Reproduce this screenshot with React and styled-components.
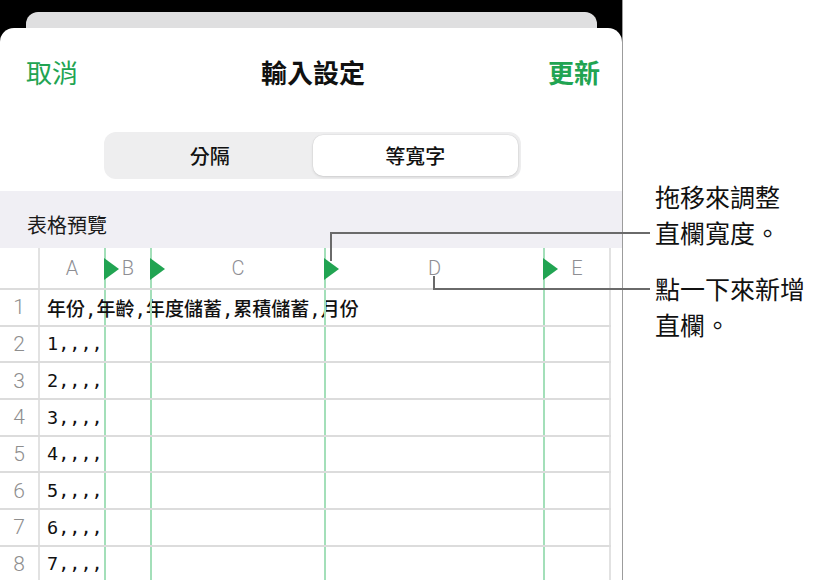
import React from "react";
import styled, { createGlobalStyle } from "styled-components";

const GREEN = "#21a452";
const CJK = `"Noto Sans CJK TC", "Noto Sans", sans-serif`;
const MONO = `"DejaVu Sans Mono", "Noto Sans CJK TC", monospace`;
const LATIN = `Roboto, "Liberation Sans", sans-serif`;

const GlobalStyle = createGlobalStyle`
  html, body { margin: 0; padding: 0; background: #fff; }
  body { width: 825px; height: 580px; overflow: hidden; font-family: ${CJK}; }
  * { box-sizing: border-box; }
`;

const Page = styled.div`
  position: relative;
  display: flex;
  width: 825px;
  height: 580px;
  overflow: hidden;
`;

const Stage = styled.div`
  width: 623px;
  flex-shrink: 0;
  background: #000;
  border-right: 1px solid #9c9c9c;
  padding-top: 12px;
  display: flex;
  flex-direction: column;
  overflow: hidden;
`;

const BackCard = styled.div`
  flex-shrink: 0;
  height: 16px;
  margin: 0 25px 0 26px;
  background: #dfdfe0;
  border-radius: 12px 12px 0 0;
`;

const Sheet = styled.div`
  flex: 1;
  min-height: 0;
  overflow: hidden;
  background: #fff;
  border-radius: 14px 14px 0 0;
  display: flex;
  flex-direction: column;
`;

const Nav = styled.div`
  flex-shrink: 0;
  display: grid;
  grid-template-columns: 1fr auto 1fr;
  align-items: center;
  padding: 29px 22px 0 26px;
  font-size: 26px;
  line-height: 30px;
`;

const NavButton = styled.span`
  color: ${GREEN};
  font-weight: ${({ $bold }) => ($bold ? 700 : 400)};
  justify-self: ${({ $end }) => ($end ? "end" : "start")};
`;

const Title = styled.span`
  color: #111;
  font-weight: 700;
`;

const Segmented = styled.div`
  flex-shrink: 0;
  margin: 45px 0 0 104px;
  width: 417px;
  height: 47px;
  padding: 3px;
  display: grid;
  grid-template-columns: 1fr 1fr;
  background: #eeeeef;
  border-radius: 12px;
`;

const Segment = styled.div`
  display: flex;
  align-items: center;
  justify-content: center;
  border-radius: 10px;
  font-size: 20px;
  font-weight: 500;
  color: #111;
  background: ${({ $active }) => ($active ? "#fff" : "transparent")};
  box-shadow: ${({ $active }) =>
    $active ? "0 1px 3px rgba(0,0,0,0.12), 0 0 0 0.5px rgba(0,0,0,0.05)" : "none"};
`;

const SectionBand = styled.div`
  flex-shrink: 0;
  margin-top: 12px;
  height: 57px;
  background: #f0eff4;
  display: flex;
  align-items: flex-end;
  padding: 0 0 9px 27px;
  font-size: 20px;
  line-height: 28px;
  color: #1a1a1a;
`;

const Table = styled.div`
  flex-shrink: 0;
  width: 611px;
`;

const Row = styled.div`
  display: grid;
  grid-template-columns: 40px 66px 46px 174px 219px 66px;
  height: ${({ $header }) => ($header ? "42px" : "36.67px")};
  border-bottom: 2px solid #dcdcdc;
`;

const Cell = styled.div`
  position: relative;
  display: flex;
  align-items: center;
  justify-content: center;
  border-right: 2px solid ${({ $green }) => ($green ? "#a3dfb9" : "#e2e2e2")};
`;

const ColLetter = styled(Cell)`
  font-family: ${LATIN};
  font-weight: 300;
  font-size: 20px;
  color: #8e8e93;
`;

const RowNum = styled(Cell)`
  font-family: ${LATIN};
  font-weight: 300;
  font-size: 21px;
  color: #8e8e8e;
`;

const DataCell = styled(Cell)`
  justify-content: flex-start;
  padding-left: 7px;
  white-space: nowrap;
  overflow: visible;
  font-family: ${MONO};
  font-size: ${({ $head }) => ($head ? "19px" : "18.5px")};
  font-weight: ${({ $head }) => ($head ? 500 : 400)};
  color: #111;
`;

const Handle = styled.span`
  position: absolute;
  left: -2px;
  top: 10px;
  width: 0;
  height: 0;
  border-left: 15px solid ${GREEN};
  border-top: 11px solid transparent;
  border-bottom: 11px solid transparent;
`;

const Notes = styled.div`
  padding: 178px 0 0 32px;
  display: flex;
  flex-direction: column;
  gap: 20px;
  font-size: 25px;
  line-height: 36px;
  color: #111;
  white-space: nowrap;
`;

const Note = styled.p`
  margin: 0;
`;

const Leaders = styled.svg`
  position: absolute;
  left: 0;
  top: 0;
  width: 825px;
  height: 580px;
  pointer-events: none;
`;

const columns = ["A", "B", "C", "D", "E"];
const rows = ["1,,,,", "2,,,,", "3,,,,", "4,,,,", "5,,,,", "6,,,,", "7,,,,"];

function EmptyCells() {
  return (
    <>
      <Cell $green />
      <Cell $green />
      <Cell $green />
      <Cell />
    </>
  );
}

export default function App() {
  return (
    <>
      <GlobalStyle />
      <Page>
        <Stage>
          <BackCard />
          <Sheet>
            <Nav>
              <NavButton>取消</NavButton>
              <Title>輸入設定</Title>
              <NavButton $bold $end>更新</NavButton>
            </Nav>
            <Segmented>
              <Segment>分隔</Segment>
              <Segment $active>等寬字</Segment>
            </Segmented>
            <SectionBand>表格預覽</SectionBand>
            <Table>
              <Row $header>
                <Cell />
                {columns.map((c, i) => (
                  <ColLetter key={c} $green={i < 4}>
                    {i > 0 && <Handle />}
                    {c}
                  </ColLetter>
                ))}
              </Row>
              <Row>
                <RowNum>1</RowNum>
                <DataCell $green $head>年份,年齡,年度儲蓄,累積儲蓄,月份</DataCell>
                <EmptyCells />
              </Row>
              {rows.map((r, i) => (
                <Row key={r}>
                  <RowNum>{i + 2}</RowNum>
                  <DataCell $green>{r}</DataCell>
                  <EmptyCells />
                </Row>
              ))}
            </Table>
          </Sheet>
        </Stage>
        <Notes>
          <Note>
            拖移來調整
            <br />
            直欄寬度。
          </Note>
          <Note>
            點一下來新增
            <br />
            直欄。
          </Note>
        </Notes>
        <Leaders viewBox="0 0 825 580">
          <path d="M331 261 V233 H650" stroke="#6a6a6a" strokeWidth="2" fill="none" />
          <path d="M434 276 V289 H650" stroke="#6a6a6a" strokeWidth="2" fill="none" />
        </Leaders>
      </Page>
    </>
  );
}
